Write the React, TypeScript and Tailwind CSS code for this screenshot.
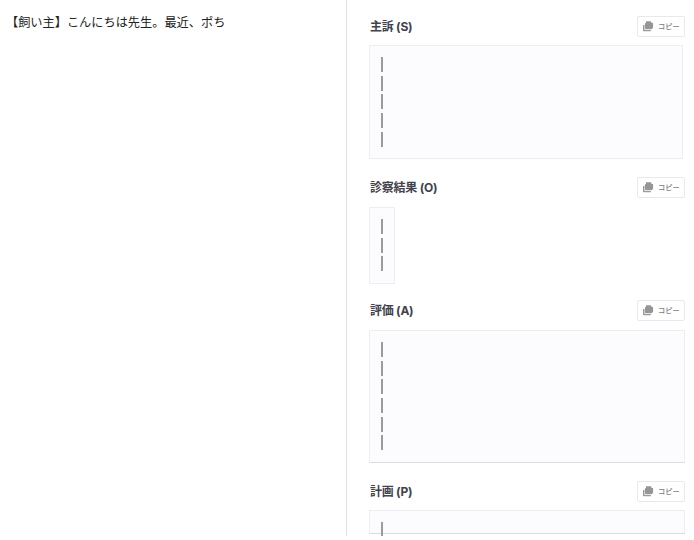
type Section = {
  title: string;
  lines: number;
  head: string;
  box: string;
};

const sections: Section[] = [
  { title: "主訴 (S)", lines: 5, head: "mb-2", box: "h-[114px] w-[314px] mb-[18px] border-b-[#ededf0]" },
  { title: "診察結果 (O)", lines: 3, head: "mb-[9px]", box: "h-[77px] w-[26px] mb-4" },
  { title: "評価 (A)", lines: 6, head: "mb-[9px]", box: "h-[133px] w-full mb-[18px] border-b-[#dcdcdf]" },
  { title: "計画 (P)", lines: 1, head: "mb-[8px]", box: "h-6 w-full border-b-[#dcdcdf]" },
];

function CopyIcon() {
  return (
    <svg width="11" height="11" viewBox="0 0 11 11" className="shrink-0">
      <path d="M0 4h1.4v4.3a.8.8 0 0 0 .8.8h5.6v1.2H.8a.8.8 0 0 1-.8-.8Z" fill="#9a9a9a" />
      <path d="M3 .3h4.8l.5 1.2 1.8.8v4.5L8.6 8.3H2.7l-.8-.9V2.5L3 1.7Z" fill="#969696" />
    </svg>
  );
}

function CopyButton() {
  return (
    <button className="flex h-[21px] w-12 items-center rounded-xs border border-[#e9e9eb] bg-white pl-[5px] text-[7.2px] leading-none font-medium text-[#7c7c7c]">
      <CopyIcon />
      <span className="ml-1 whitespace-nowrap">コピー</span>
    </button>
  );
}

function Note({ title, lines, head, box }: Section) {
  return (
    <section>
      <div className={`flex h-[21px] items-center justify-between ${head}`}>
        <h2 className="pl-px text-[12px] leading-[21px] font-bold tracking-[-0.02em] whitespace-nowrap text-[#42424c]">{title}</h2>
        <CopyButton />
      </div>
      <div className={`border border-[#eeeef1] bg-[#fcfcfe] pt-[11px] pl-[11px] ${box}`}>
        <div className="flex flex-col gap-[3.7px]">
          {Array.from({ length: lines }, (_, i) => (
            <div key={i} className="h-[15px] w-0.5 shrink-0 bg-[#9b9b9b]" />
          ))}
        </div>
      </div>
    </section>
  );
}

export default function App() {
  return (
    <div className="h-[540px] w-[694px] overflow-hidden bg-white font-['Inter','Noto_Sans_CJK_JP',sans-serif]">
      <div className="flex h-[536px] overflow-hidden">
        <main className="w-[347px] shrink-0 border-r border-[#e2e2e4] pt-[13px] pl-[6px]">
          <p className="text-[12.2px] leading-5 whitespace-nowrap text-[#222]">【飼い主】こんにちは先生。最近、ポち</p>
        </main>
        <aside className="w-[338px] shrink-0 pt-4 pl-[22px]">
          {sections.map((s) => (
            <Note key={s.title} {...s} />
          ))}
        </aside>
      </div>
    </div>
  );
}
